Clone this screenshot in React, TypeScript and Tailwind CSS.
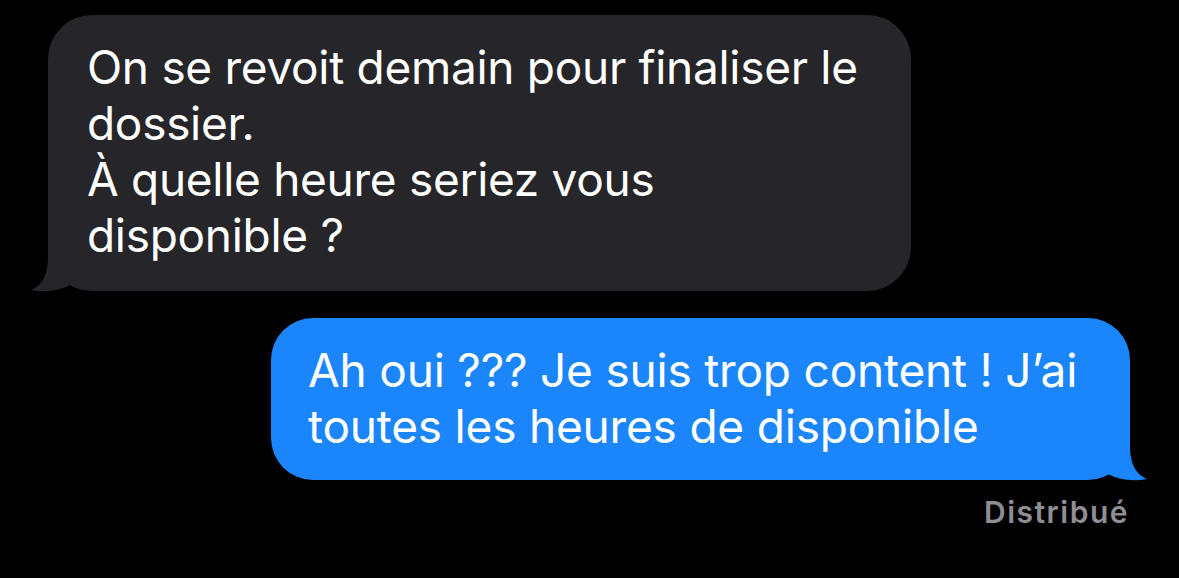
import React from 'react';

const Tail = ({ color, side }: { color: string; side: 'left' | 'right' }) => (
  <svg
    width="55"
    height="57"
    viewBox="0 0 55 57"
    className={`absolute bottom-[-2px] ${side === 'right' ? 'right-[-20px]' : 'left-[-20px] -scale-x-100'}`}
  >
    <path d="M35 2 L35 20 C35 40 41 49 52 54 C37 57 22 54 13 49 L3 2 Z" fill={color} />
  </svg>
);

export default function App() {
  return (
    <div
      className="w-[1179px] h-[578px] bg-black flex flex-col pl-[48px] pr-[49px] pt-[15px] overflow-hidden"
      style={{ fontFamily: 'Inter, "Noto Sans", sans-serif' }}
    >
      <div className="relative self-start w-[863px] rounded-[44px] bg-[#262529] pl-[39px] pt-[24px] pb-[28px] text-white text-[46px] leading-[56px] tracking-[-0.3px]">
        <Tail color="#262529" side="left" />
        <p className="relative">
          On se revoit demain pour finaliser le
          <br />
          dossier.
          <br />
          À quelle heure seriez vous
          <br />
          disponible ?
        </p>
      </div>

      <div className="relative self-end mt-[27px] w-[859px] rounded-[42px] bg-[#1b86fc] pl-[37px] pt-[24px] pb-[26px] text-white text-[46px] leading-[56px] tracking-[-0.2px]">
        <Tail color="#1b86fc" side="right" />
        <p className="relative">
          Ah oui ??? Je suis trop content ! J’ai
          <br />
          toutes les heures de disponible
        </p>
      </div>

      <div className="self-end mt-[15px] pr-[1px] text-[30px] leading-[34px] font-semibold tracking-[1.5px] text-[#8e8e93]">
        Distribué
      </div>
    </div>
  );
}
